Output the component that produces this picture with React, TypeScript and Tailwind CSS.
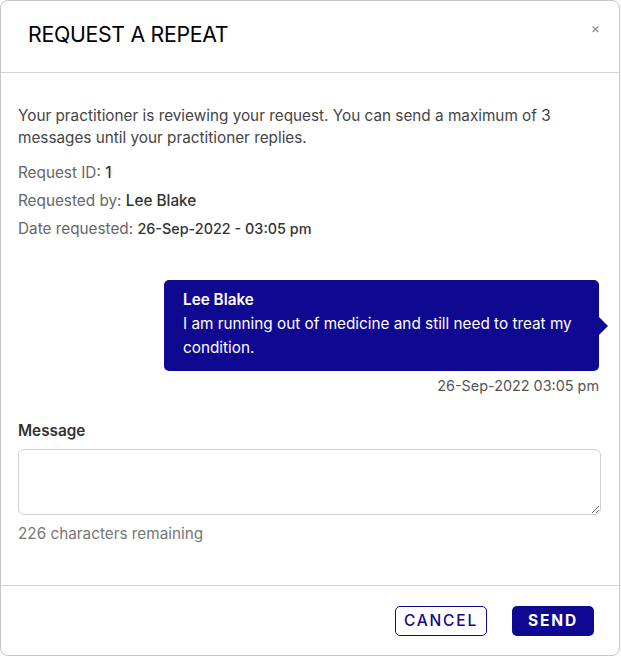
import React from 'react'

const meta = [
  { label: 'Request ID:', value: '1' },
  { label: 'Requested by:', value: 'Lee Blake' },
  { label: 'Date requested:', value: '26-Sep-2022 - 03:05 pm', small: true },
]

export default function App() {
  return (
    <div className="w-[621px] h-[657px] bg-white" style={{ fontFamily: 'Inter, "Noto Sans", sans-serif' }}>
      <div className="w-[620px] h-[656px] border border-[#c8c8c8] rounded-[8px] flex flex-col overflow-hidden">
        <div className="relative h-[72px] shrink-0 border-b border-[#d4d4d4] flex items-center pl-[27px]">
          <h1 className="text-[21.3px] text-black tracking-[-0.3px] leading-none mt-[-4px]">REQUEST A REPEAT</h1>
          <button className="absolute right-[19px] top-[20px] text-[#888] text-[14px] leading-none">×</button>
        </div>

        <div className="flex-1 pl-[17px] pr-[20px] pt-[32px] text-[15.3px] text-[#444]">
          <p className="leading-[22px] pr-[10px]">
            Your practitioner is reviewing your request. You can send a maximum of 3 messages until your practitioner replies.
          </p>
          <div className="mt-[10px]">
            {meta.map(m => (
              <div key={m.label} className="leading-[28px] text-[#666]">
                {m.label}{' '}
                <span className={m.small ? 'font-medium text-[#333] text-[14.4px]' : 'font-medium text-[#333]'}>{m.value}</span>
              </div>
            ))}
          </div>

          <div className="mt-[37px] flex flex-col items-end">
            <div className="relative w-[435px] bg-[#0f0891] text-white rounded-[5px] pl-[19px] pr-[14px] pt-[8px] pb-[11px] leading-[24px]">
              <div className="font-semibold">Lee Blake</div>
              <div>I am running out of medicine and still need to treat my condition.</div>
              <span className="absolute right-[-9px] top-[37px] w-0 h-0 border-y-[9px] border-y-transparent border-l-[9px] border-l-[#0f0891]" />
            </div>
            <div className="mt-[4px] leading-[22px] text-[#555] text-[14.4px]">26-Sep-2022 03:05 pm</div>
          </div>

          <label className="block mt-[23px] font-semibold text-[#333] leading-[22px]">Message</label>
          <textarea className="block mt-[7px] w-[583px] h-[66px] border border-[#cdd1d6] rounded-[6px] resize-y outline-none px-3 py-2" />
          <div className="mt-[8px] leading-[22px] text-[#777]">226 characters remaining</div>
        </div>

        <div className="h-[70px] shrink-0 border-t border-[#d4d4d4] flex items-start justify-end gap-[25px] pt-[20px] pr-[25px]">
          <button className="w-[92px] h-[30px] border border-[#0f0891] rounded-[5px] text-[#0f0891] text-[15.5px] tracking-[1.8px] font-medium">
            CANCEL
          </button>
          <button className="w-[82px] h-[30px] bg-[#0f0891] rounded-[5px] text-white text-[15.5px] tracking-[1.8px] font-bold">
            SEND
          </button>
        </div>
      </div>
    </div>
  )
}
